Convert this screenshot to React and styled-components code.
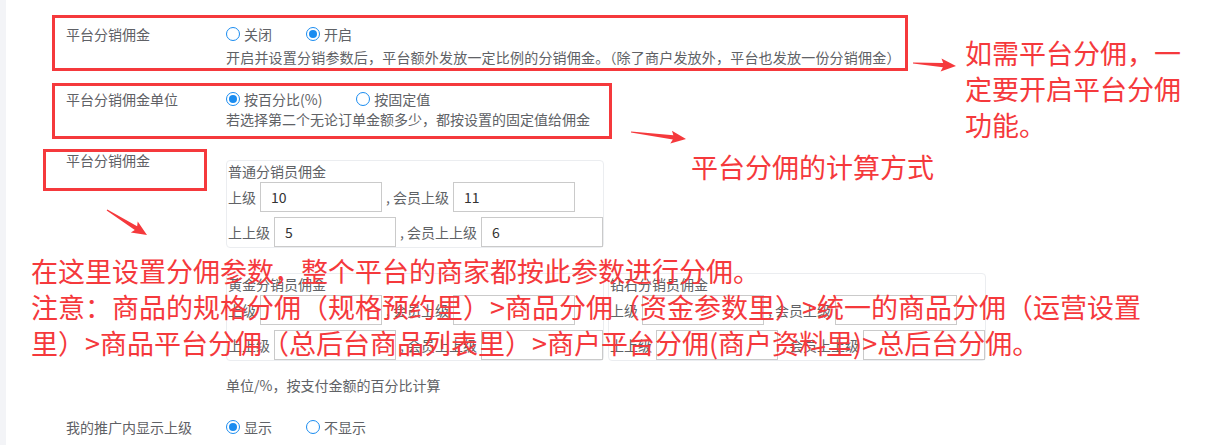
import React from 'react'
import styled, { createGlobalStyle } from 'styled-components'

const GlobalStyle = createGlobalStyle`
  html, body {
    margin: 0;
    padding: 0;
    background: #fff;
  }
  body {
    font-family: "Noto Sans CJK SC", "Microsoft YaHei", sans-serif;
  }
`

const annotRed = '#f5393c'

const Page = styled.div`
  position: relative;
  display: flex;
  width: 1205px;
  height: 445px;
  overflow: hidden;
`

const SideStrip = styled.div`
  width: 6px;
  flex-shrink: 0;
  background: #f3f4f7;
`

const Main = styled.div`
  flex: 1;
  padding: 24px 0 0 60px;
  font-size: 14px;
  line-height: 20px;
  color: #606266;
`

const FormRow = styled.div`
  display: grid;
  grid-template-columns: 160px 1fr;
  margin-top: ${p => p.$top || 0}px;
`

const Label = styled.div`
  color: #5f6166;
  white-space: nowrap;
`

const Field = styled.div`
  display: flex;
  flex-direction: column;
  align-items: flex-start;
  padding-top: ${p => p.$pad || 0}px;
`

const RadioGroup = styled.div`
  display: flex;
  gap: 34px;
`

const Option = styled.label`
  display: flex;
  align-items: center;
  gap: 4px;
`

const RadioDot = styled.span`
  box-sizing: border-box;
  width: 14px;
  height: 14px;
  border-radius: 50%;
  border: 1px solid #1a8cf0;
  display: inline-flex;
  align-items: center;
  justify-content: center;
  &::after {
    content: '';
    width: 8px;
    height: 8px;
    border-radius: 50%;
    background: ${p => (p.$checked ? '#1a8cf0' : 'transparent')};
  }
`

const Hint = styled.div`
  margin-top: ${p => p.$top || 0}px;
  white-space: nowrap;
  letter-spacing: ${p => p.$ls || 0}px;
`

const Card = styled.div`
  border: 1px solid #ebedf0;
  border-radius: 4px;
  display: flex;
  flex-direction: column;
  gap: 5px;
`

const CardTitle = styled.div`
  line-height: 21px;
  padding-left: 1px;
  margin-bottom: -5px;
`

const CardLine = styled.div`
  display: flex;
  align-items: center;
  gap: 4px;
  white-space: pre;
  padding-left: 1px;
`

const ValueInput = styled.input`
  box-sizing: border-box;
  width: 122px;
  height: 30px;
  border: 1px solid #cacaca;
  padding: 0 10px;
  font: inherit;
  font-size: 14px;
  color: #333;
  outline: none;
  background: #fff;
`

const CardPair = styled.div`
  display: flex;
  gap: 4px;
  margin-top: 25px;
`

// annotation layer (drawn over the screenshot content)
const RedBox = styled.div`
  position: absolute;
  left: ${p => p.$x}px;
  top: ${p => p.$y}px;
  width: ${p => p.$w}px;
  height: ${p => p.$h}px;
  box-sizing: border-box;
  border: 3px solid ${annotRed};
  pointer-events: none;
`

const Note = styled.div`
  position: absolute;
  left: ${p => p.$x}px;
  top: ${p => p.$y}px;
  width: ${p => (p.$w ? `${p.$w}px` : 'auto')};
  font-size: 27px;
  line-height: 36px;
  color: ${annotRed};
  white-space: ${p => (p.$w ? 'normal' : 'nowrap')};
  pointer-events: none;
`

const ArrowLayer = styled.svg`
  position: absolute;
  left: 0;
  top: 0;
  pointer-events: none;
`

const Arrow = ({ x1, y1, x2, y2 }) => {
  const L = Math.hypot(x2 - x1, y2 - y1)
  const deg = (Math.atan2(y2 - y1, x2 - x1) * 180) / Math.PI
  const pts = [
    [0, -0.6], [L - 13, -2.2], [L - 15, -6.5], [L, 0],
    [L - 15, 6.5], [L - 13, 2.2], [0, 0.6],
  ].map(p => p.join(',')).join(' ')
  return (
    <g transform={`translate(${x1} ${y1}) rotate(${deg})`}>
      <polygon points={pts} fill={annotRed} />
    </g>
  )
}

const Radio = ({ checked, children }) => (
  <Option>
    <RadioDot $checked={checked} />
    {children}
  </Option>
)

const LevelCard = ({ title, a = '', b = '', c = '', d = '' }) => (
  <Card>
    <CardTitle>{title}</CardTitle>
    <CardLine>
      上级<ValueInput defaultValue={a} />, 会员上级<ValueInput defaultValue={b} />
    </CardLine>
    <CardLine>
      上上级<ValueInput defaultValue={c} />, 会员上上级<ValueInput defaultValue={d} />
    </CardLine>
  </Card>
)

export default function App() {
  return (
    <Page>
      <GlobalStyle />
      <SideStrip />
      <Main>
        <FormRow>
          <Label>平台分销佣金</Label>
          <Field>
            <RadioGroup>
              <Radio>关闭</Radio>
              <Radio checked>开启</Radio>
            </RadioGroup>
            <Hint $top={3} $ls={0.2}>
              开启并设置分销参数后，平台额外发放一定比例的分销佣金。（除了商户发放外，平台也发放一份分销佣金）
            </Hint>
          </Field>
        </FormRow>

        <FormRow $top={22}>
          <Label>平台分销佣金单位</Label>
          <Field>
            <RadioGroup>
              <Radio checked>按百分比(%)</Radio>
              <Radio>按固定值</Radio>
            </RadioGroup>
            <Hint>若选择第二个无论订单金额多少，都按设置的固定值给佣金</Hint>
          </Field>
        </FormRow>

        <FormRow $top={21}>
          <Label>平台分销佣金</Label>
          <Field $pad={10}>
            <LevelCard title="普通分销员佣金" a="10" b="11" c="5" d="6" />
            <CardPair>
              <LevelCard title="黄金分销员佣金" />
              <LevelCard title="钻石分销员佣金" />
            </CardPair>
            <Hint $top={14}>单位/%，按支付金额的百分比计算</Hint>
          </Field>
        </FormRow>

        <FormRow $top={22}>
          <Label>我的推广内显示上级</Label>
          <Field>
            <RadioGroup>
              <Radio checked>显示</Radio>
              <Radio>不显示</Radio>
            </RadioGroup>
          </Field>
        </FormRow>
      </Main>

      <RedBox $x={52} $y={15} $w={856} $h={56} />
      <RedBox $x={52} $y={83} $w={560} $h={56} />
      <RedBox $x={43} $y={149} $w={164} $h={42} />

      <ArrowLayer width="1205" height="445">
        <Arrow x1={913} y1={63} x2={956} y2={66} />
        <Arrow x1={631} y1={132} x2={686} y2={139} />
        <Arrow x1={107} y1={210} x2={147} y2={235} />
      </ArrowLayer>

      <Note $x={965} $y={35} $w={222}>如需平台分佣，一定要开启平台分佣功能。</Note>
      <Note $x={691} $y={149}>平台分佣的计算方式</Note>
      <Note $x={31} $y={253}>
        在这里设置分佣参数，整个平台的商家都按此参数进行分佣。
        <br />
        注意：商品的规格分佣（规格预约里）&gt;商品分佣（资金参数里）&gt;统一的商品分佣（运营设置
        <br />
        里）&gt;商品平台分佣（总后台商品列表里）&gt;商户平台分佣(商户资料里)&gt;总后台分佣。
      </Note>
    </Page>
  )
}
